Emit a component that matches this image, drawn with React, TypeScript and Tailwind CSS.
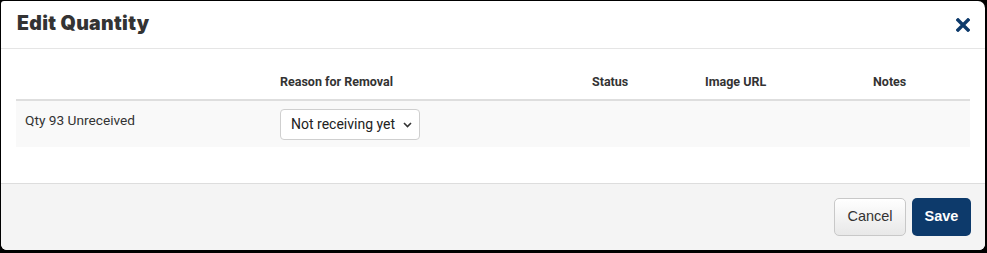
import React from 'react';

export default function App() {
    return (
        <div className="w-[987px] h-[253px] bg-black pt-px pl-px pr-[2px] pb-[3px]">
            <div className="w-full h-full bg-white rounded-tl-[3px] rounded-tr-[7px] rounded-b-[6px] overflow-hidden flex flex-col">
                {/* Header */}
                <div className="h-[48px] flex items-center justify-between pl-[16px] pr-[15px] border-b border-[#e5e5e5] shrink-0">
                    <h2 className="text-[19.5px] font-black text-[#333] tracking-[0.3px] -mt-[2px]" style={{ fontFamily: 'Inter, sans-serif' }}>
                        Edit Quantity
                    </h2>
                    <svg width="14" height="14" viewBox="0 0 14 14" className="mt-[1px]">
                        <path d="M2 2 L12 12 M12 2 L2 12" stroke="#0d3a6b" strokeWidth="3.4" strokeLinecap="square" />
                    </svg>
                </div>

                {/* Body */}
                <div className="flex-1 px-[15px] pt-[1px]" style={{ fontFamily: 'Roboto, Inter, sans-serif' }}>
                    <div className="grid grid-cols-[256px_312px_113px_168px_1fr] h-[51px] items-center border-b-2 border-[#dedede] text-[12.5px] font-bold text-[#333]">
                        <div className="px-[9px]"></div>
                        <div className="px-[8px] pt-[16px]">Reason for Removal</div>
                        <div className="px-[8px] pt-[16px]">Status</div>
                        <div className="px-[8px] pt-[16px]">Image URL</div>
                        <div className="px-[8px] pt-[16px]">Notes</div>
                    </div>
                    <div className="grid grid-cols-[256px_312px_113px_168px_1fr] h-[46px] bg-[#f9f9f9] text-[13.7px] text-[#333]">
                        <div className="px-[9px] pt-[9px]">Qty 93 Unreceived</div>
                        <div className="px-[8px] pt-[8px]">
                            <div className="w-[140px] h-[31px] border border-[#cfcfcf] rounded-[4px] bg-white flex items-center justify-between pl-[10px] pr-[7px] text-[14px] text-[#222] whitespace-nowrap">
                                <span>Not receiving yet</span>
                                <svg width="9" height="6" viewBox="0 0 9 6">
                                    <path d="M1 1 L4.5 4.5 L8 1" stroke="#333" strokeWidth="1.6" fill="none" />
                                </svg>
                            </div>
                        </div>
                        <div></div>
                        <div></div>
                        <div></div>
                    </div>
                </div>

                {/* Footer */}
                <div className="h-[67px] bg-[#f4f4f4] border-t border-[#dddddd] flex items-center justify-end gap-[6px] pr-[14px] shrink-0" style={{ fontFamily: '"Liberation Sans", Arial, sans-serif' }}>
                    <button className="w-[72px] h-[38px] rounded-[5px] border border-[#c8c8c8] bg-gradient-to-b from-white to-[#e8e8e8] text-[14.5px] text-[#333]">
                        Cancel
                    </button>
                    <button className="w-[59px] h-[38px] rounded-[5px] bg-[#0d3a6b] text-[14.5px] font-bold text-white">
                        Save
                    </button>
                </div>
            </div>
        </div>
    );
}
